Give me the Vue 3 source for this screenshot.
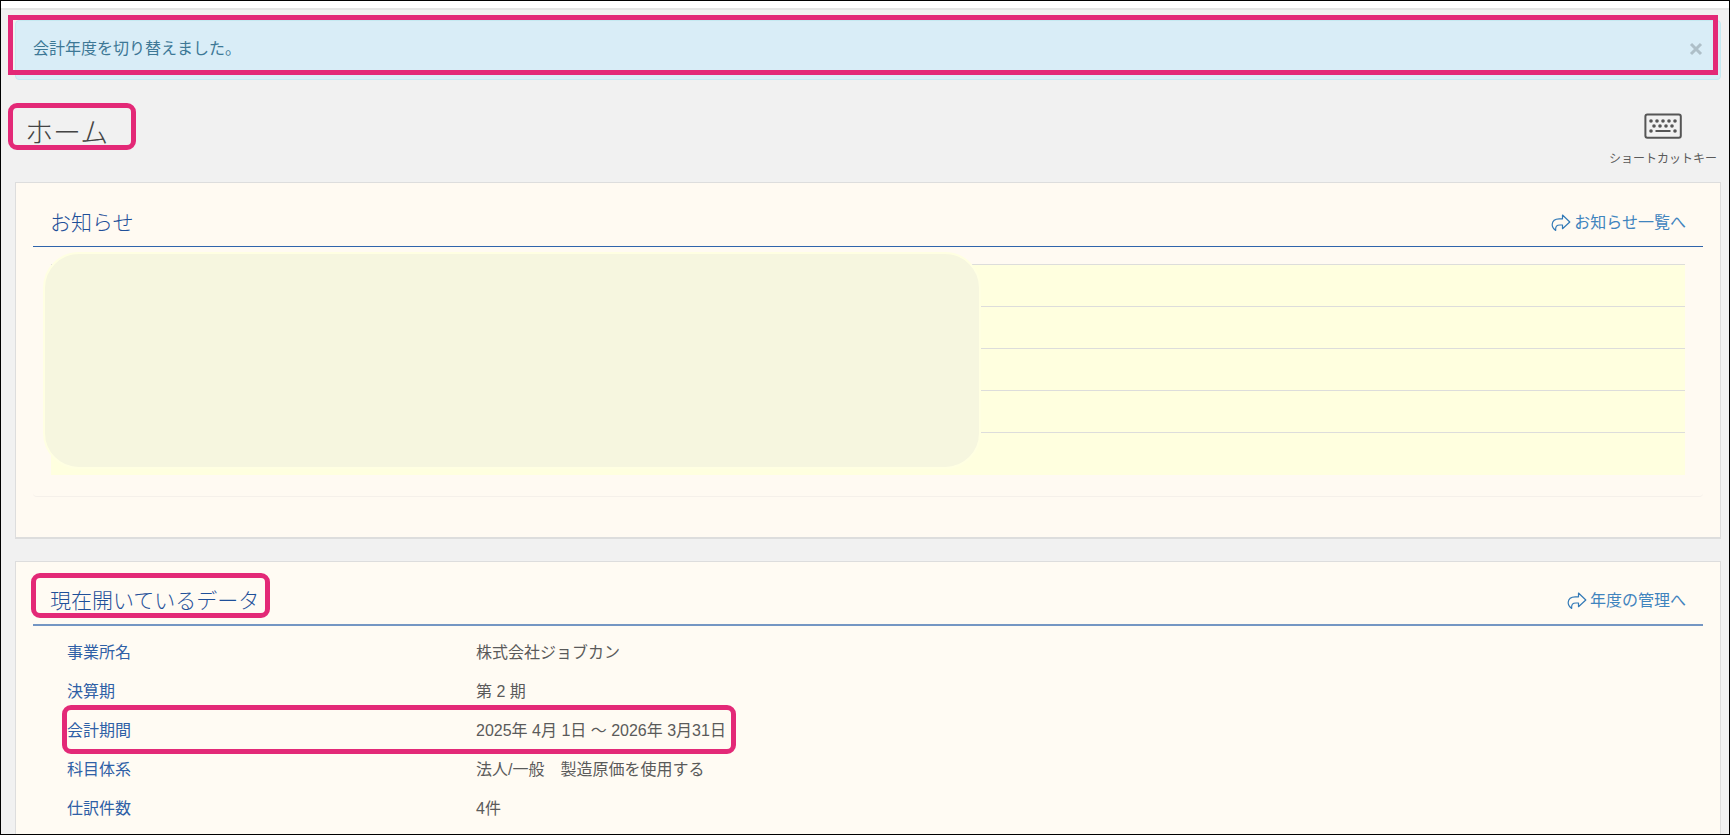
<script setup>
import { ref } from 'vue'

const showAlert = ref(true)
const notices = [1, 2, 3, 4, 5]
const rows = [
  { label: '事業所名', value: '株式会社ジョブカン' },
  { label: '決算期', value: '第 2 期' },
  { label: '会計期間', value: '2025年 4月 1日 ～ 2026年 3月31日', marked: true },
  { label: '科目体系', value: '法人/一般　製造原価を使用する' },
  { label: '仕訳件数', value: '4件' },
]
const keyDots = [
  [6, 7], [12, 7], [18, 7], [24, 7], [30, 7],
  [9, 12], [15, 12], [21, 12], [27, 12],
  [6, 17], [30, 17],
]
</script>

<template>
  <div class="page">
    <div class="topbar"></div>
    <main class="content">
      <div class="alert" :class="{ closed: !showAlert }" role="status">
        <span>会計年度を切り替えました。</span>
        <button type="button" class="close" aria-label="閉じる" @click="showAlert = false">
          <svg width="14" height="14" viewBox="0 0 14 14"><path d="M2 2L12 12M12 2L2 12" /></svg>
        </button>
        <span class="mark mark-alert"></span>
      </div>

      <header class="page-head">
        <h1>ホーム<span class="mark mark-title"></span></h1>
        <button type="button" class="shortcut">
          <svg width="38" height="26" viewBox="-1 -1 38 26">
            <rect x="0.4" y="0.4" width="35.4" height="23.4" rx="2" class="frame" />
            <circle v-for="(d, i) in keyDots" :key="i" :cx="d[0]" :cy="d[1]" r="1.8" />
            <rect x="10.5" y="16" width="15" height="2" />
          </svg>
          <span>ショートカットキー</span>
        </button>
      </header>

      <section class="panel">
        <div class="panel-head">
          <h2>お知らせ</h2>
          <a href="#notices">
            <svg width="20" height="18" viewBox="0 0 20 18"><path d="M11.5 1L18.8 8L11.5 14.7V11H9C5.8 11 4.2 12.1 4.7 16.4C2.2 14.7 1 12.8 1.2 10.3C1.5 6.7 4.4 4.8 8.2 4.8H11.5Z" /></svg>
            <span>お知らせ一覧へ</span>
          </a>
        </div>
        <div class="notice-body">
          <ul class="notices">
            <li v-for="n in notices" :key="n"></li>
            <li class="cover" aria-hidden="true"></li>
          </ul>
        </div>
      </section>

      <section class="panel panel-data">
        <div class="panel-head head-data">
          <h2>現在開いているデータ<span class="mark mark-data"></span></h2>
          <a href="#years">
            <svg width="20" height="18" viewBox="0 0 20 18"><path d="M11.5 1L18.8 8L11.5 14.7V11H9C5.8 11 4.2 12.1 4.7 16.4C2.2 14.7 1 12.8 1.2 10.3C1.5 6.7 4.4 4.8 8.2 4.8H11.5Z" /></svg>
            <span>年度の管理へ</span>
          </a>
        </div>
        <table>
          <tbody>
            <tr v-for="row in rows" :key="row.label">
              <th scope="row">{{ row.label }}</th>
              <td>{{ row.value }}<span v-if="row.marked" class="mark mark-row"></span></td>
            </tr>
          </tbody>
        </table>
      </section>
    </main>
  </div>
</template>

<style>
body {
  margin: 0;
}
</style>

<style scoped>
* {
  box-sizing: border-box;
}
.page {
  display: flex;
  flex-direction: column;
  height: 100vh;
  overflow: hidden;
  border: 1px solid #000;
  background: #f1f1f1;
  color: #5a5a5a;
  font: 400 16px/24px "Liberation Sans", "Noto Sans CJK JP", sans-serif;
}
.topbar {
  flex: none;
  height: 9px;
  background: #fff;
  border-bottom: 2px solid #e5e5e5;
}
.content {
  flex: 1;
  display: flex;
  flex-direction: column;
  min-height: 0;
  padding: 10px 8px 0 14px;
}
.alert {
  flex: none;
  position: relative;
  display: flex;
  align-items: center;
  justify-content: space-between;
  height: 60px;
  padding: 0 17px 2px;
  border: 1px solid #c5e9f1;
  border-radius: 4px;
  background: #d9edf7;
  color: #3d7896;
}
.alert.closed {
  visibility: hidden;
}
button {
  padding: 0;
  border: 0;
  background: none;
  color: inherit;
  font: inherit;
  cursor: pointer;
}
.close {
  display: flex;
}
.close path {
  stroke: #aebfc8;
  stroke-width: 3;
}
.mark {
  position: absolute;
  border: 5px solid #e32977;
  border-radius: 9px;
  pointer-events: none;
}
.mark-alert {
  inset: -6px 2px 4px -8px;
  border-radius: 0;
}
.page-head {
  flex: none;
  display: flex;
  justify-content: space-between;
  height: 102px;
  padding: 32px 4px 0 10px;
}
h1,
h2 {
  position: relative;
  margin: 0;
  font-weight: 300;
}
h1 {
  align-self: flex-start;
  color: #444;
  font-size: 28px;
  line-height: 44px;
}
.mark-title {
  inset: -9px -28px 6px -17px;
}
.shortcut {
  display: flex;
  flex-direction: column;
  align-items: center;
  align-self: flex-start;
  gap: 10px;
  padding-top: 1px;
  font-size: 12px;
  line-height: 20px;
}
.shortcut svg {
  fill: #555;
}
.shortcut .frame {
  fill: none;
  stroke: #555;
  stroke-width: 2;
}
.panel {
  flex: none;
  margin-bottom: 22px;
  padding: 18px 17px 40px;
  border: 1px solid #ddd;
  border-bottom-width: 2px;
  background: #fffaf2;
}
.panel-head {
  display: flex;
  align-items: center;
  justify-content: space-between;
  height: 46px;
  padding: 0 17px 2px;
  border-bottom: 1px solid #2f64ab;
}
h2 {
  color: #1f5099;
  font-size: 21px;
  line-height: 30px;
}
a {
  display: flex;
  align-items: center;
  gap: 3px;
  color: #3f84be;
  text-decoration: none;
}
a path {
  fill: none;
  stroke: #337ab7;
  stroke-width: 1.2;
  stroke-linejoin: round;
}
.notice-body {
  padding: 17px 18px 21px;
  border-bottom: 1px solid #f5f0ea;
  border-radius: 0 0 4px 4px;
}
.notices {
  position: relative;
  margin: 0;
  padding: 0 0 1px;
  background: #ffffdf;
  list-style: none;
}
.notices li {
  height: 42px;
  border-top: 1px solid #dddddb;
}
.notices .cover {
  position: absolute;
  top: -12px;
  bottom: 6px;
  left: -8px;
  width: 57.4%;
  height: auto;
  border: 2px solid #ffffe2;
  border-radius: 36px;
  background: #f6f6df;
}
.panel-data {
  flex: 1;
  margin-bottom: 0;
  padding-bottom: 0;
  border-bottom: 0;
  background: #fffbf3;
}
.head-data {
  border-bottom: 2px solid #7496c3;
}
.mark-data {
  inset: -13px -11px -2px -19px;
}
table {
  width: 100%;
  margin-top: 7px;
  border-collapse: collapse;
  table-layout: fixed;
}
tr {
  position: relative;
  height: 39px;
}
th,
td {
  padding: 0;
  font-weight: 400;
  text-align: left;
  vertical-align: middle;
}
th {
  width: 443px;
  padding-left: 34px;
  color: #2f60a6;
}
.mark-row {
  top: -6px;
  left: 29px;
  width: 674px;
  height: 49px;
}
</style>
